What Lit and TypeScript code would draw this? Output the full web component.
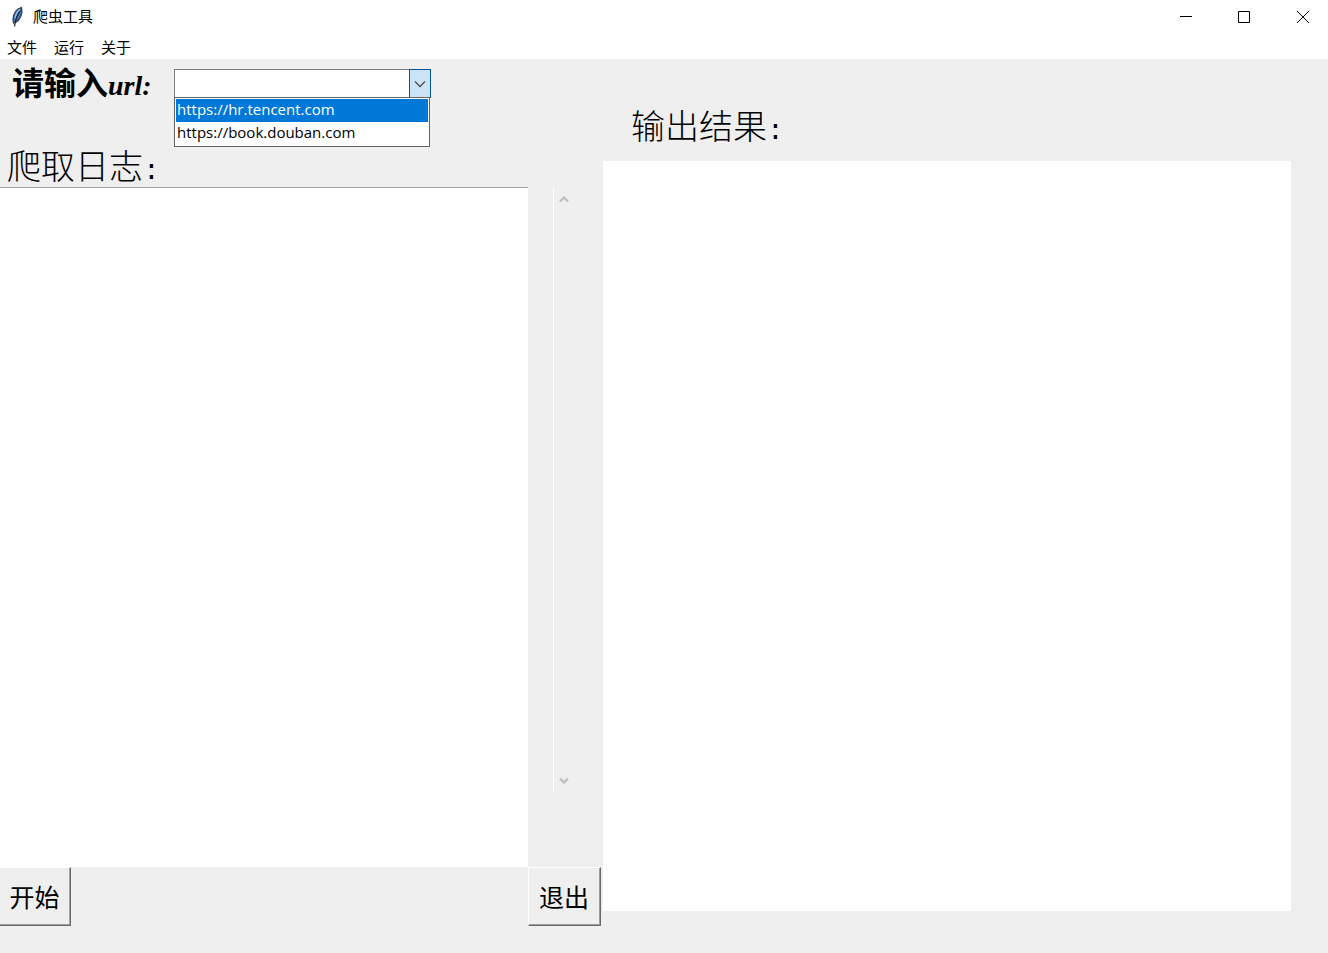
import { LitElement, html, css } from "lit";
import { customElement, state } from "lit/decorators.js";

const SITES = ["https://hr.tencent.com", "https://book.douban.com"];

@customElement("url-combobox")
class UrlCombobox extends LitElement {
  static styles = css`
    :host { display: block; position: relative; width: 257px; }
    .field { display: flex; height: 29px; box-sizing: border-box; }
    .entry {
      flex: 1; min-width: 0; box-sizing: border-box; margin: 0; padding: 0 4px;
      border: 1px solid #7a7a7a; border-right: 0; border-radius: 0; outline: 0;
      background: #fff; font: 16px "Open Sans", "Noto Sans CJK SC", sans-serif;
    }
    .drop {
      display: flex; align-items: center; justify-content: center; width: 22px;
      box-sizing: border-box; margin: 0; padding: 0; border: 1px solid #005499;
      border-radius: 0; background: #cce4f7;
    }
    .popup {
      position: absolute; top: 28px; left: 0; width: 256px; height: 50px; z-index: 1;
      box-sizing: border-box; margin: 0; padding: 1px; overflow: hidden;
      border: 1px solid #646464; border-radius: 0; outline: 0; background: #fff;
      font: 15px "Open Sans", "Noto Sans CJK SC", sans-serif; color: #000;
    }
    .option { height: 23px; min-height: 23px; line-height: 23px; padding: 0 1px; box-sizing: border-box; }
    .option:checked {
      background: #0078d7 linear-gradient(#0078d7, #0078d7);
      color: #fff; -webkit-text-fill-color: #fff;
    }
  `;

  @state() private open = true;
  @state() private value = "";

  private pick(e: Event) {
    this.value = (e.target as HTMLSelectElement).value;
    this.open = false;
  }

  render() {
    return html`
      <div class="field">
        <input class="entry" type="text" aria-label="请输入url" .value=${this.value} />
        <button class="drop" aria-label="展开" @click=${() => (this.open = !this.open)}>
          <svg width="12" height="8" viewBox="0 0 12 8" fill="none" stroke="#505050" stroke-width="1.3">
            <path d="M1 1.5 6 6.5 11 1.5" />
          </svg>
        </button>
      </div>
      ${this.open
        ? html`<select class="popup" size="2" aria-label="网址列表" @change=${this.pick}>
            ${SITES.map((s, i) => html`<option class="option" ?selected=${i === 0}>${s}</option>`)}
          </select>`
        : ""}
    `;
  }
}

@customElement("app-root")
class AppRoot extends LitElement {
  static styles = css`
    :host {
      display: flex; flex-direction: column; min-height: 100vh; background: #efefef;
      color: #000; font: 15px/20px "Noto Sans CJK SC", sans-serif;
    }
    .titlebar { display: flex; align-items: center; height: 34px; background: #fff; }
    .feather { margin: 0 8px 0 10px; }
    .title { flex: 1; margin: 0; padding-bottom: 2px; font-size: 15px; font-weight: 400; }
    .caption {
      display: flex; align-items: center; justify-content: center; width: 58px; height: 34px;
      padding: 0; border: 0; background: none;
    }
    .caption:last-child { width: 55px; padding-left: 5px; box-sizing: border-box; }
    .menubar { display: flex; gap: 17px; height: 25px; padding: 0 7px; background: #fff; }
    .menu { height: 25px; padding: 0; border: 0; background: none; color: inherit; font: inherit; }
    .content { flex: 1; display: flex; padding-right: 37px; }
    .left { flex: 33 1 75px; display: flex; flex-direction: column; min-width: 0; padding-bottom: 27px; }
    .right { flex: 43 1 0; display: flex; flex-direction: column; min-width: 0; padding-bottom: 42px; }
    .url { display: flex; gap: 20px; height: 84px; padding: 10px 0 0 12px; box-sizing: border-box; }
    .url-label { width: 142px; height: 29px; font-size: 32px; line-height: 24px; font-weight: 700; white-space: nowrap; }
    .latin { font: italic 700 28px/24px "Liberation Serif", serif; }
    .heading { font: 300 34px/44px "Noto Sans CJK SC", sans-serif; white-space: nowrap; box-sizing: border-box; }
    .colon { font: 28px/44px "Liberation Mono", monospace; }
    .log-heading { height: 44px; padding-left: 7px; }
    .out-heading { height: 102px; padding: 44px 0 0 28px; }
    .middle { flex: 1; display: flex; }
    .text {
      flex: 1; min-width: 0; display: block; box-sizing: border-box; margin: 0; padding: 4px;
      border: 0; border-radius: 0; outline: 0; resize: none; background: #fff;
      font: 16px/20px "Noto Sans CJK SC", sans-serif;
    }
    .log { border-top: 1px solid #a0a0a0; }
    .gutter { width: 75px; box-sizing: border-box; padding: 0 29px 75px 25px; display: flex; }
    .scroll {
      flex: 1; display: flex; flex-direction: column; justify-content: space-between;
      padding: 7px 0 6px; border-left: 1px solid #fff;
    }
    .arrow { display: flex; width: 20px; height: 10px; padding: 0; border: 0; background: none; align-items: center; justify-content: center; }
    .actions { display: flex; justify-content: space-between; padding-right: 2px; }
    .action {
      width: 73px; height: 59px; box-sizing: border-box; padding: 0 1px 1px 0; border: 1px solid;
      border-color: #fff #696969 #696969 #fff; border-radius: 0; background: #efefef;
      box-shadow: inset -1px -1px #a0a0a0; color: #000; font: 25px/32px "Noto Sans CJK SC", sans-serif;
    }
    .start { width: 71px; border-left: 0; }
  `;

  render() {
    return html`
      <header class="titlebar">
        <svg class="feather" width="15" height="22" viewBox="0 0 15 22">
          <path d="M11.500 1.500C7 2.500 3.500 7 3 13.500L3.500 17 6.500 16C10.500 13.500 13 7 11.500 1.500Z" fill="#4579b8" stroke="#333a44" stroke-width="1.2" />
          <path d="M10.500 4C8 8 5.500 12 4.500 20.500" fill="none" stroke="#17202c" stroke-width="1.200" />
          <path d="M10 3.500C7.500 5.500 5.500 9 5 12" fill="none" stroke="#9cc4ee" stroke-width="1.200" />
        </svg>
        <h1 class="title">爬虫工具</h1>
        <button class="caption" aria-label="最小化">
          <svg width="12" height="12" viewBox="0 0 12 12" stroke="#000"><path d="M0 5.500H12" /></svg>
        </button>
        <button class="caption" aria-label="最大化">
          <svg width="12" height="12" viewBox="0 0 12 12" stroke="#000" fill="none"><path d="M.5.5H11.500V11.500H.5Z" /></svg>
        </button>
        <button class="caption" aria-label="关闭">
          <svg width="12" height="12" viewBox="0 0 12 12" stroke="#000"><path d="M0 0 12 12M12 0 0 12" /></svg>
        </button>
      </header>
      <nav class="menubar">
        ${["文件", "运行", "关于"].map((m) => html`<button class="menu">${m}</button>`)}
      </nav>
      <main class="content">
        <section class="left">
          <div class="url">
            <span class="url-label">请输入<span class="latin">url:</span></span>
            <url-combobox></url-combobox>
          </div>
          <label class="heading log-heading" for="log">爬取日志<span class="colon">:</span></label>
          <div class="middle">
            <textarea class="text log" id="log"></textarea>
            <div class="gutter">
              <div class="scroll">
                <button class="arrow" aria-label="向上滚动">
                  <svg width="10" height="8" viewBox="0 0 10 8" fill="none" stroke="#bfbfbf" stroke-width="2.400"><path d="M1 6.500 5 2.500 9 6.500" /></svg>
                </button>
                <button class="arrow" aria-label="向下滚动">
                  <svg width="10" height="8" viewBox="0 0 10 8" fill="none" stroke="#bfbfbf" stroke-width="2.400"><path d="M1 1.500 5 5.500 9 1.500" /></svg>
                </button>
              </div>
            </div>
          </div>
          <div class="actions">
            <button class="action start">开始</button>
            <button class="action">退出</button>
          </div>
        </section>
        <section class="right">
          <label class="heading out-heading" for="out">输出结果<span class="colon">:</span></label>
          <textarea class="text" id="out"></textarea>
        </section>
      </main>
    `;
  }
}
